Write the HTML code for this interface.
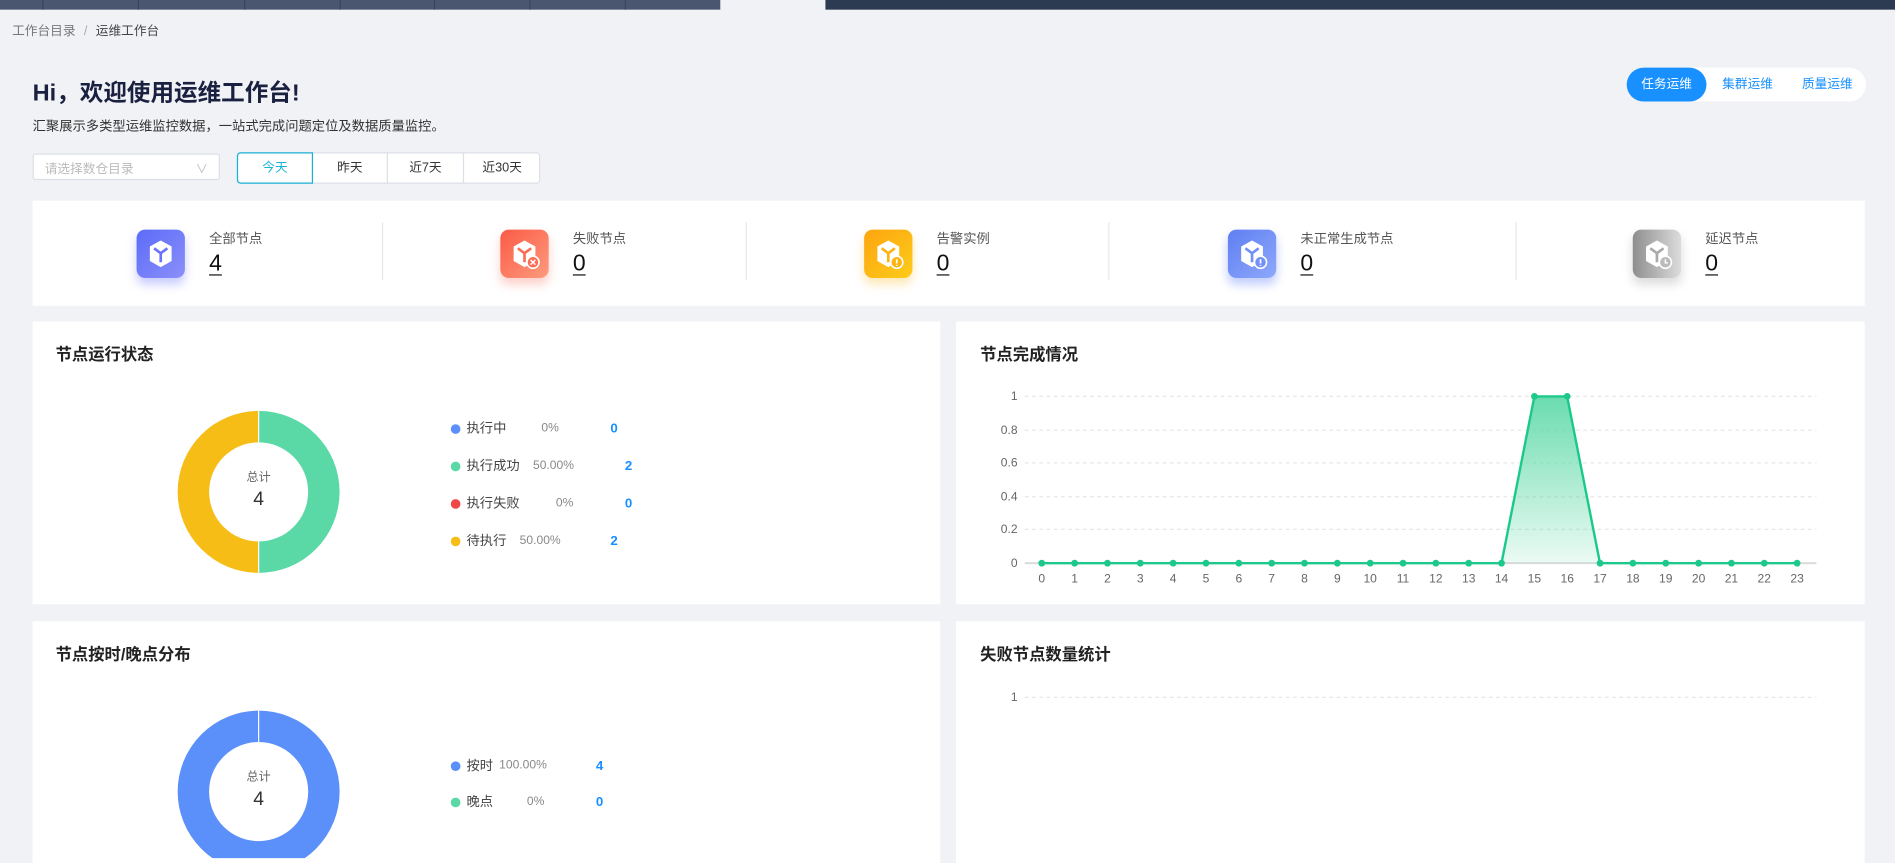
<!DOCTYPE html>
<html><head><meta charset="utf-8"><style>
*{margin:0;padding:0;box-sizing:border-box}
html,body{width:1895px;height:856px;overflow:hidden;background:#f0f2f5}
#w{position:absolute;left:0;top:0;width:1568px;height:710px;transform:scale(1.20855);transform-origin:0 0;font-family:"Liberation Sans","Noto Sans CJK SC",sans-serif;color:#333}
.a{position:absolute;white-space:nowrap}
.card{position:absolute;background:#fff}
.lbl{font-size:11px;color:#555}
.num{font-size:19px;color:#111;text-decoration:underline;text-underline-offset:3px}
.ic{position:absolute;width:40px;height:40px;border-radius:7px}
.pt{font-size:13.5px;font-weight:bold;color:#222}
.lg{font-size:11px}
.lg span{top:0;line-height:14px}
.lg .d{position:absolute;width:8px;height:8px;border-radius:50%;top:3px !important}
</style></head><body><div id="w">
<div class="a" style="left:0;top:0;width:596px;height:8px;background:#4a5670"></div>
<div class="a" style="left:35px;top:0;width:1px;height:8px;background:#3a4458"></div>
<div class="a" style="left:114px;top:0;width:1px;height:8px;background:#3a4458"></div>
<div class="a" style="left:202px;top:0;width:1px;height:8px;background:#3a4458"></div>
<div class="a" style="left:281px;top:0;width:1px;height:8px;background:#3a4458"></div>
<div class="a" style="left:359px;top:0;width:1px;height:8px;background:#3a4458"></div>
<div class="a" style="left:438px;top:0;width:1px;height:8px;background:#3a4458"></div>
<div class="a" style="left:517px;top:0;width:1px;height:8px;background:#3a4458"></div>
<div class="a" style="left:683px;top:0;width:885px;height:8px;background:#2c3a52"></div>

<div class="a" style="left:10px;top:18px;font-size:10.5px;color:#777">工作台目录 <span style="margin:0 4px;color:#aaa">/</span> <span style="color:#444">运维工作台</span></div>
<div class="a" style="left:27px;top:60px;font-size:19.5px;font-weight:bold;color:#1a2040">Hi，欢迎使用运维工作台!</div>
<div class="a" style="left:27px;top:96px;font-size:11px;color:#333">汇聚展示多类型运维监控数据，一站式完成问题定位及数据质量监控。</div>

<div class="a" style="left:27px;top:127px;width:155px;height:22px;background:#fff;border:1px solid #dcdfe6;border-radius:2px;font-size:10.5px;color:#bbb;padding:4px 9px">请选择数仓目录<span style="position:absolute;right:9px;top:3px;color:#bbb;font-size:10px">∨</span></div>
<div class="a" style="left:196px;top:126px;width:251px;height:26px;background:#fff;border:1px solid #dcdfe6;border-radius:3px"></div>
<div class="a" style="left:196px;top:126px;width:63px;height:26px;border:1px solid #17b3d6;border-radius:3px 0 0 3px;font-size:10.5px;color:#17b3d6;text-align:center;line-height:24px">今天</div>
<div class="a" style="left:259px;top:126px;width:62px;height:26px;border-right:1px solid #dcdfe6;font-size:10.5px;color:#333;text-align:center;line-height:26px">昨天</div>
<div class="a" style="left:321px;top:126px;width:63px;height:26px;border-right:1px solid #dcdfe6;font-size:10.5px;color:#333;text-align:center;line-height:26px">近7天</div>
<div class="a" style="left:384px;top:126px;width:63px;height:26px;font-size:10.5px;color:#333;text-align:center;line-height:26px">近30天</div>

<div class="a" style="left:1346px;top:56px;width:198px;height:28px;background:#fff;border-radius:14px"></div>
<div class="a" style="left:1346px;top:56px;width:66px;height:28px;background:#1890ff;border-radius:14px;color:#fff;font-size:10.5px;text-align:center;line-height:28px">任务运维</div>
<div class="a" style="left:1425px;top:56px;font-size:10.5px;color:#1890ff;line-height:28px">集群运维</div>
<div class="a" style="left:1491px;top:56px;font-size:10.5px;color:#1890ff;line-height:28px">质量运维</div>

<div class="card" style="left:27px;top:166px;width:1516px;height:87px"></div>
<div class="a" style="left:316px;top:184px;width:1px;height:48px;background:#e8e8e8"></div>
<div class="a" style="left:617px;top:184px;width:1px;height:48px;background:#e8e8e8"></div>
<div class="a" style="left:917px;top:184px;width:1px;height:48px;background:#e8e8e8"></div>
<div class="a" style="left:1254px;top:184px;width:1px;height:48px;background:#e8e8e8"></div>
<svg width="0" height="0" style="position:absolute"><defs><symbol id="cube" viewBox="0 0 40 40"><path d="M20 9 L29 14 V26 L20 31 L11 26 V14 Z" fill="#fff"/><path d="M14.5 15.5 L20 19.5 L25.5 15.5 M20 19.5 V27" stroke="currentColor" stroke-width="2.2" fill="none"/></symbol></defs></svg>
<div class="ic" style="left:113px;top:190px;background:linear-gradient(135deg,#5b6cf9,#8c8ff9);box-shadow:0 5px 8px rgba(100,110,250,.35);color:#6c72f9"><svg width="40" height="40"><use href="#cube"/></svg></div>
<div class="ic" style="left:414px;top:190px;background:linear-gradient(135deg,#fb5a45,#fd9b7e);box-shadow:0 5px 8px rgba(250,100,80,.3);color:#fb6e56"><svg width="40" height="40"><use href="#cube"/><circle cx="27" cy="27" r="5" fill="#fb6e56" stroke="#fff" stroke-width="1.3"/><path d="M25 25l4 4m0-4l-4 4" stroke="#fff" stroke-width="1.2"/></svg></div>
<div class="ic" style="left:715px;top:190px;background:linear-gradient(135deg,#fda50f,#fdcb1a);box-shadow:0 5px 8px rgba(253,180,20,.3);color:#fdb412"><svg width="40" height="40"><use href="#cube"/><circle cx="27" cy="27" r="5" fill="#fdb412" stroke="#fff" stroke-width="1.3"/><path d="M27 24.5v3.5m0 1.2v.8" stroke="#fff" stroke-width="1.4"/></svg></div>
<div class="ic" style="left:1016px;top:190px;background:linear-gradient(135deg,#5f7ff2,#8ea8fb);box-shadow:0 5px 8px rgba(100,130,250,.4);color:#7390f6"><svg width="40" height="40"><use href="#cube"/><circle cx="27" cy="27" r="5" fill="#7390f6" stroke="#fff" stroke-width="1.3"/><path d="M27 24.5v3.5m0 1.2v.8" stroke="#fff" stroke-width="1.4"/></svg></div>
<div class="ic" style="left:1351px;top:190px;background:linear-gradient(90deg,#8e8e8e,#dcdcdc);box-shadow:0 5px 8px rgba(120,120,120,.25);color:#aaa"><svg width="40" height="40"><use href="#cube"/><circle cx="27" cy="27" r="5" fill="#bbb" stroke="#fff" stroke-width="1.3"/><path d="M27 24.5V27.5h2" stroke="#fff" stroke-width="1.2" fill="none"/></svg></div>

<div class="a lbl" style="left:173px;top:189px">全部节点</div><div class="a num" style="left:173px;top:208px">4</div>
<div class="a lbl" style="left:474px;top:189px">失败节点</div><div class="a num" style="left:474px;top:208px">0</div>
<div class="a lbl" style="left:775px;top:189px">告警实例</div><div class="a num" style="left:775px;top:208px">0</div>
<div class="a lbl" style="left:1076px;top:189px">未正常生成节点</div><div class="a num" style="left:1076px;top:208px">0</div>
<div class="a lbl" style="left:1411px;top:189px">延迟节点</div><div class="a num" style="left:1411px;top:208px">0</div>

<div class="card" style="left:27px;top:266px;width:751px;height:234px"></div>
<div class="card" style="left:791px;top:266px;width:752px;height:234px"></div>
<div class="card" style="left:27px;top:514px;width:751px;height:200px"></div>
<div class="card" style="left:791px;top:514px;width:752px;height:200px"></div>
<div class="a pt" style="left:46px;top:282px">节点运行状态</div>
<div class="a pt" style="left:811px;top:282px">节点完成情况</div>
<div class="a pt" style="left:46px;top:530px">节点按时/晚点分布</div>
<div class="a pt" style="left:811px;top:530px">失败节点数量统计</div>

<svg class="a" style="left:0;top:0" width="1568" height="710">
<path d="M214 340 A67 67 0 0 1 214 474 L214 448 A41 41 0 0 0 214 366Z" fill="#5ad8a6"/>
<path d="M214 474 A67 67 0 0 1 214 340 L214 366 A41 41 0 0 0 214 448Z" fill="#f6bd16"/>
<line x1="214" y1="340" x2="214" y2="366" stroke="#fff"/><line x1="214" y1="448" x2="214" y2="474" stroke="#fff"/>
<text x="214" y="398" font-size="10" fill="#666" text-anchor="middle" font-family="Liberation Sans,Noto Sans CJK SC,sans-serif">总计</text>
<text x="214" y="418" font-size="16" fill="#333" text-anchor="middle" font-family="Liberation Sans,sans-serif">4</text>
<circle cx="214" cy="655" r="54" fill="none" stroke="#5b8ff9" stroke-width="26"/>
<line x1="214" y1="588" x2="214" y2="614" stroke="#fff"/>
<text x="214" y="646" font-size="10" fill="#666" text-anchor="middle" font-family="Liberation Sans,Noto Sans CJK SC,sans-serif">总计</text>
<text x="214" y="666" font-size="16" fill="#333" text-anchor="middle" font-family="Liberation Sans,sans-serif">4</text>
<defs><linearGradient id="g" x1="0" y1="0" x2="0" y2="1"><stop offset="0" stop-color="#5ad8a6" stop-opacity=".9"/><stop offset="1" stop-color="#5ad8a6" stop-opacity=".12"/></linearGradient></defs>
<g font-family="Liberation Sans,sans-serif" font-size="10" fill="#666">
<g stroke="#e6e6e6" stroke-dasharray="3,3"><line x1="848" y1="328" x2="1503" y2="328"/><line x1="848" y1="356" x2="1503" y2="356"/><line x1="848" y1="383" x2="1503" y2="383"/><line x1="848" y1="411" x2="1503" y2="411"/><line x1="848" y1="438" x2="1503" y2="438"/><line x1="848" y1="577" x2="1503" y2="577"/></g>
<line x1="848" y1="466" x2="1503" y2="466" stroke="#d9d9d9" stroke-width="1.5"/>
<g text-anchor="end"><text x="842" y="331">1</text><text x="842" y="359">0.8</text><text x="842" y="386">0.6</text><text x="842" y="414">0.4</text><text x="842" y="441">0.2</text><text x="842" y="469">0</text><text x="842" y="580">1</text></g>
<path d="M1242.4 466 L1269.6 328 L1296.7 328 L1323.9 466Z" fill="url(#g)"/>
<polyline points="862,466 1242.4,466 1269.6,328 1296.7,328 1323.9,466 1487,466" fill="none" stroke="#1cc98a" stroke-width="2"/>
<g fill="#1cc98a" id="dots"></g>
<g text-anchor="middle" id="xl"></g>
</g>
</svg>

<div class="a lg" style="left:373px;top:348px;width:200px;height:110px">
<div class="a" style="top:0"><span class="d" style="left:0;background:#5b8ff9"></span><span class="a" style="left:13px;color:#444">执行中</span><span class="a" style="left:75px;color:#888;font-size:10px">0%</span><span class="a" style="left:132px;color:#1890ff;font-weight:bold">0</span></div>
<div class="a" style="top:31px"><span class="d" style="left:0;background:#5ad8a6"></span><span class="a" style="left:13px;color:#444">执行成功</span><span class="a" style="left:68px;color:#888;font-size:10px">50.00%</span><span class="a" style="left:144px;color:#1890ff;font-weight:bold">2</span></div>
<div class="a" style="top:62px"><span class="d" style="left:0;background:#f04848"></span><span class="a" style="left:13px;color:#444">执行失败</span><span class="a" style="left:87px;color:#888;font-size:10px">0%</span><span class="a" style="left:144px;color:#1890ff;font-weight:bold">0</span></div>
<div class="a" style="top:93px"><span class="d" style="left:0;background:#f6bd16"></span><span class="a" style="left:13px;color:#444">待执行</span><span class="a" style="left:57px;color:#888;font-size:10px">50.00%</span><span class="a" style="left:132px;color:#1890ff;font-weight:bold">2</span></div>
</div>
<div class="a lg" style="left:373px;top:627px;width:200px;height:50px">
<div class="a" style="top:0"><span class="d" style="left:0;background:#5b8ff9"></span><span class="a" style="left:13px;color:#444">按时</span><span class="a" style="left:40px;color:#888;font-size:10px">100.00%</span><span class="a" style="left:120px;color:#1890ff;font-weight:bold">4</span></div>
<div class="a" style="top:30px"><span class="d" style="left:0;background:#5ad8a6"></span><span class="a" style="left:13px;color:#444">晚点</span><span class="a" style="left:63px;color:#888;font-size:10px">0%</span><span class="a" style="left:120px;color:#1890ff;font-weight:bold">0</span></div>
</div>
</div>
<script>
var d=document.getElementById('dots'),x=document.getElementById('xl'),n='http://www.w3.org/2000/svg';
for(var i=0;i<24;i++){var cx=862+i*27.174,cy=(i==15||i==16)?328:466;var c=document.createElementNS(n,'circle');c.setAttribute('cx',cx);c.setAttribute('cy',cy);c.setAttribute('r',2.8);d.appendChild(c);var t=document.createElementNS(n,'text');t.setAttribute('x',cx);t.setAttribute('y',482);t.textContent=i;x.appendChild(t);}
</script>
</body></html>
